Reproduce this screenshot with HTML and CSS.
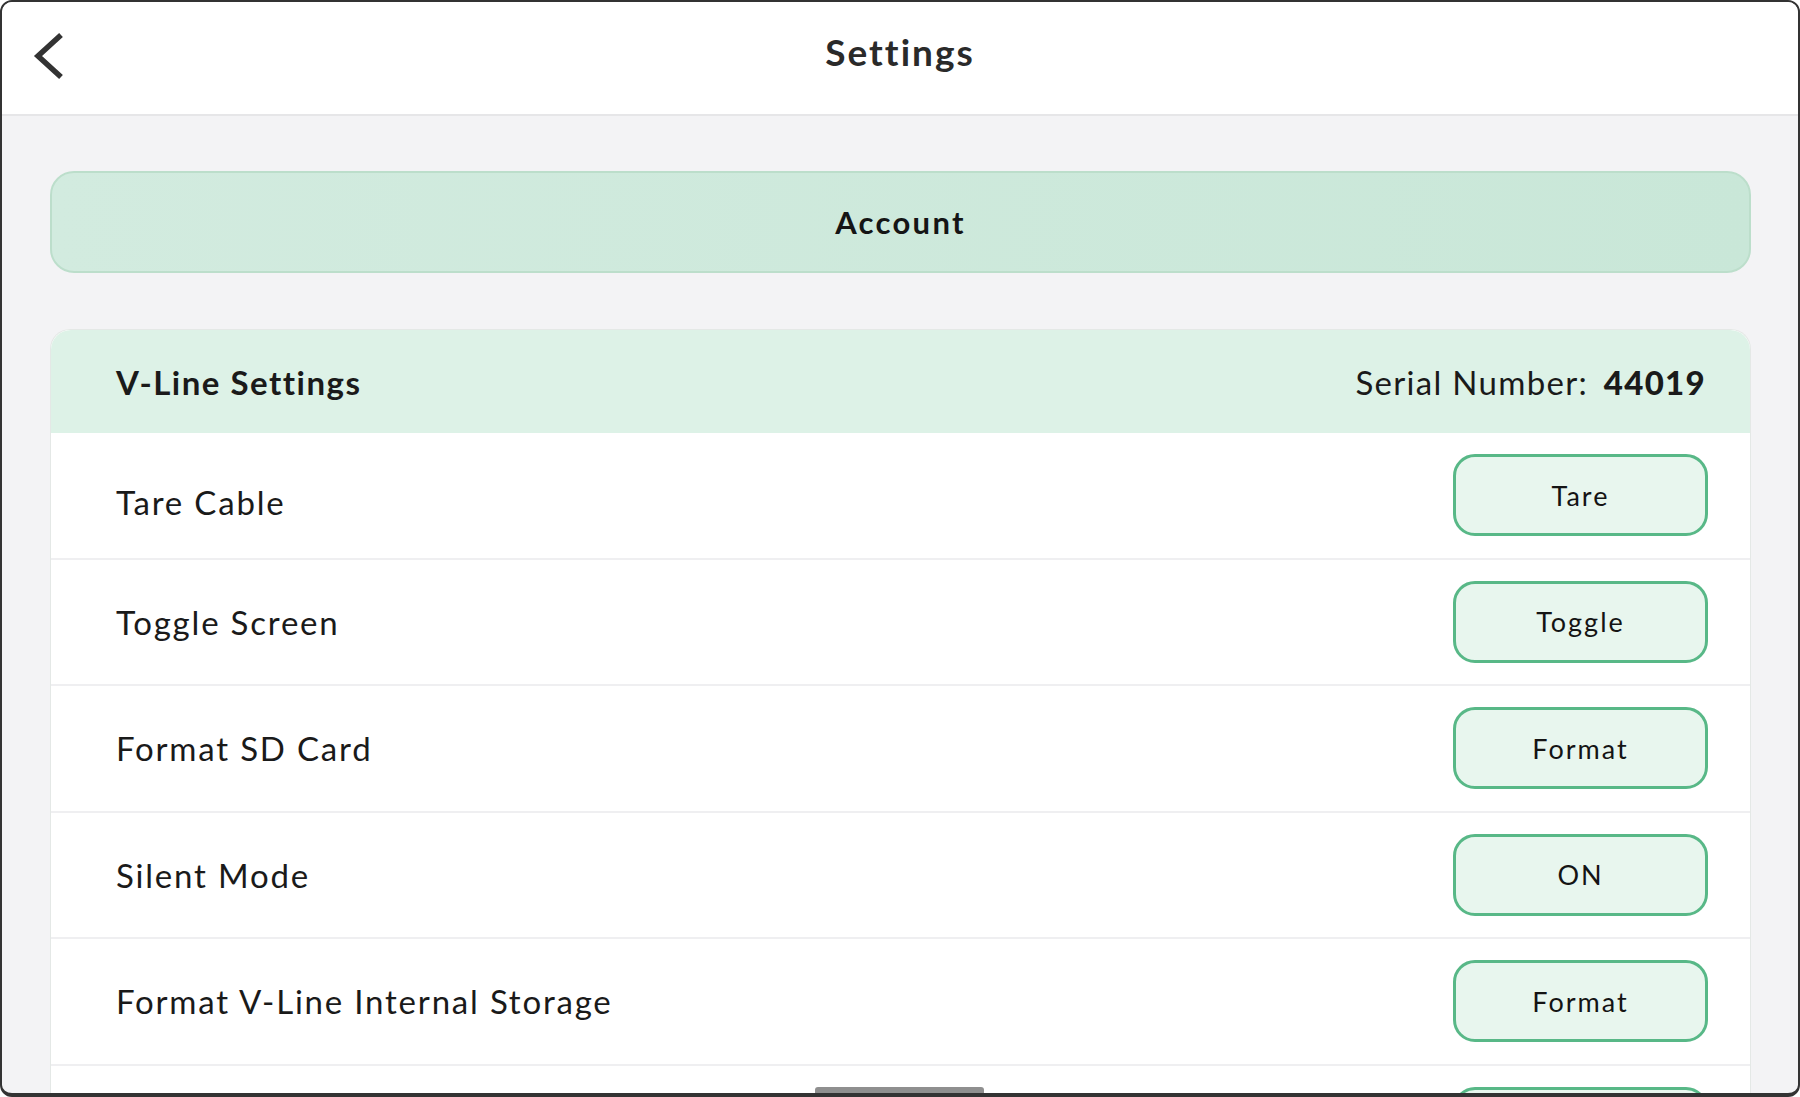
FILE: index.html
```html
<!DOCTYPE html>
<html lang="en">
<head>
  <meta charset="UTF-8" />
  <meta name="viewport" content="width=device-width, initial-scale=1.0" />
  <title>Settings</title>
  <link rel="stylesheet" href="styles.css">
</head>
<body>
  <div class="device">
    <header class="topbar">
      <button class="back" aria-label="Back">
        <svg width="40" height="56" viewBox="0 0 40 56">
          <polyline points="33,7 10,28 33,49" fill="none" stroke="#333" stroke-width="5.5" stroke-linejoin="miter" />
        </svg>
      </button>
      <h1>Settings</h1>
      <span></span>
    </header>

    <main class="content">
      <button class="account-btn">Account</button>

      <section class="card">
        <div class="card-head">
          <h2>V-Line Settings</h2>
          <div class="serial">Serial Number: <strong>44019</strong></div>
        </div>
        <div class="row">
          <span class="label label-first">Tare Cable</span>
          <button class="action">Tare</button>
        </div>
        <div class="row">
          <span class="label">Toggle Screen</span>
          <button class="action">Toggle</button>
        </div>
        <div class="row">
          <span class="label">Format SD Card</span>
          <button class="action">Format</button>
        </div>
        <div class="row">
          <span class="label">Silent Mode</span>
          <button class="action">ON</button>
        </div>
        <div class="row">
          <span class="label">Format V-Line Internal Storage</span>
          <button class="action">Format</button>
        </div>
        <div class="row">
          <span class="label">Factory Reset</span>
          <button class="action">Reset</button>
        </div>
      </section>
    </main>

    <div class="home-bar"></div>
  </div>
</body>
</html>
```

FILE: styles.css
```css
* {
  box-sizing: border-box;
}
body {
  margin: 0;
  font-family: "Lato", "Noto Sans", sans-serif;
  color: #1c1c1c;
  background: #ffffff;
}
.device {
  position: relative;
  width: 1800px;
  height: 1097px;
  border: 2px solid #333;
  border-bottom-width: 4px;
  border-radius: 12px;
  overflow: hidden;
  background: #f3f3f5;
  display: flex;
  flex-direction: column;
}
.topbar {
  flex: none;
  height: 114px;
  background: #ffffff;
  border-bottom: 2px solid #e6e6e8;
  display: grid;
  grid-template-columns: 1fr auto 1fr;
  align-items: center;
}
.back {
  justify-self: start;
  background: none;
  border: none;
  padding: 0;
  margin: 0 0 4px 26px;
  cursor: pointer;
  display: flex;
}
.topbar h1 {
  margin: 0 0 14px;
  font-size: 37px;
  font-weight: 700;
  letter-spacing: 2px;
  color: #2a2a2a;
}
.content {
  flex: 1;
  overflow: hidden;
  padding: 55px 47px 0 48px;
  display: flex;
  flex-direction: column;
  gap: 56px;
}
.account-btn {
  flex: none;
  height: 102px;
  width: 100%;
  border: 2px solid #bcdecb;
  border-radius: 24px;
  background: linear-gradient(90deg, #d2ebdf, #c9e7d8);
  font-family: inherit;
  font-size: 31px;
  font-weight: 700;
  letter-spacing: 2.3px;
  color: #151515;
  cursor: pointer;
}
.card {
  flex: none;
  background: #ffffff;
  border-radius: 20px 20px 0 0;
  border: 1px solid #e4e8e6;
  border-bottom: none;
}
.card-head {
  height: 103px;
  background: #ddf2e7;
  border-radius: 20px 20px 0 0;
  display: flex;
  align-items: center;
  justify-content: space-between;
  padding: 0 44px 0 65px;
}
.card-head h2 {
  margin: 0;
  font-size: 33px;
  font-weight: 700;
  letter-spacing: 1.5px;
  color: #1a1a1a;
}
.serial {
  font-size: 33px;
  letter-spacing: 1.3px;
  color: #1a1a1a;
}
.serial strong {
  margin-left: 6px;
  font-weight: 900;
}
.row {
  height: 126.5px;
  border-bottom: 2px solid #efeff1;
  display: flex;
  align-items: center;
  justify-content: space-between;
  padding: 0 42px 0 65px;
}
.label {
  padding-top: 0;
  font-size: 33px;
  letter-spacing: 1.8px;
  color: #1a1a1a;
}
.label-first {
  padding-top: 13px;
}
.action {
  width: 255px;
  height: 82px;
  border: 3px solid #58b887;
  border-radius: 22px;
  background: #e8f6ee;
  font-family: inherit;
  font-size: 27px;
  letter-spacing: 2px;
  color: #141414;
  cursor: pointer;
}
.home-bar {
  position: absolute;
  left: 50%;
  bottom: 0;
  width: 169px;
  height: 6px;
  margin-left: -85px;
  border-radius: 3px 3px 0 0;
  background: #8f8f8f;
}
```
